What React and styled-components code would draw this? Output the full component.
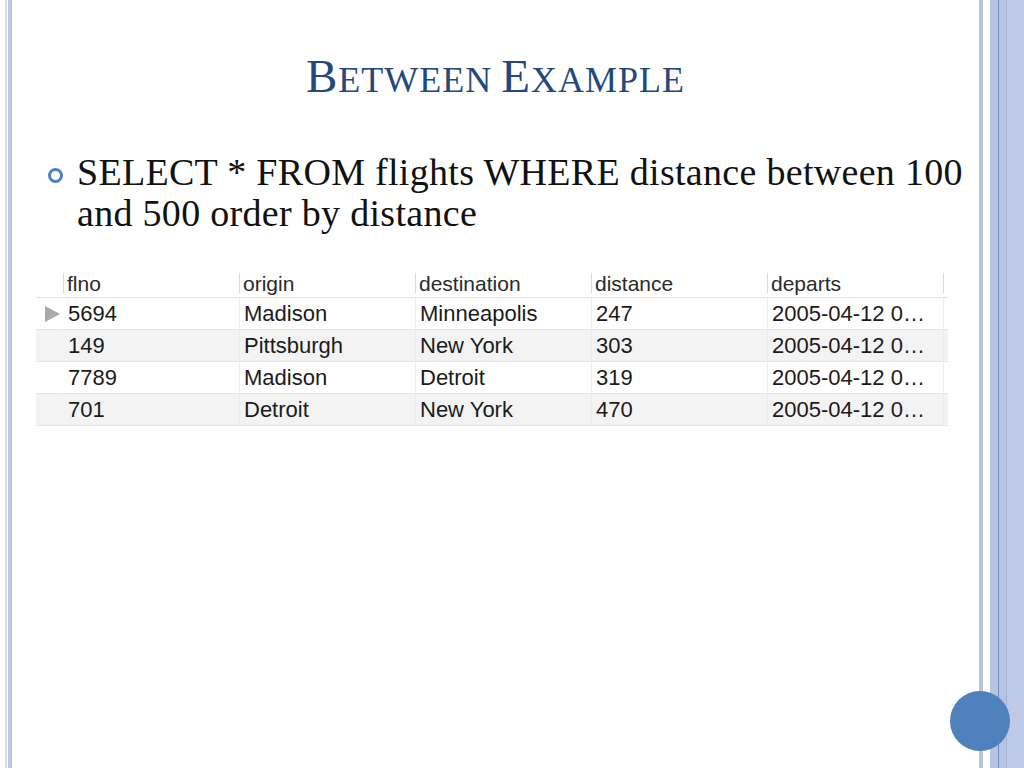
import React from "react";
import styled, { createGlobalStyle } from "styled-components";

const Global = createGlobalStyle`
  html, body { margin: 0; padding: 0; background: #ffffff; }
  #root { width: 1024px; height: 768px; }
`;

const Slide = styled.div`
  position: relative;
  width: 1024px;
  height: 768px;
  overflow: hidden;
  display: flex;
  background: #ffffff;
`;

const LeftRail = styled.div`
  flex: 0 0 12px;
  background: linear-gradient(
    to right,
    #ffffff 0 5px,
    #d4dbef 5px 7px,
    #ffffff 7px 8px,
    #bac6e6 8px 12px
  );
`;

const RightRail = styled.div`
  flex: 0 0 45px;
  background: linear-gradient(
    to right,
    #bac5da 0 4px,
    #ffffff 4px 11px,
    #b6c4e2 11px 19px,
    #6e8ec6 19px 20px,
    #b6c4e2 20px 27px,
    #a5b5d8 27px 28px,
    #bdc9e6 28px 45px
  );
`;

const Main = styled.main`
  flex: 1;
  display: flex;
  flex-direction: column;
`;

const Title = styled.h1`
  margin: 48px 0 0;
  font-family: "Liberation Serif", "Times New Roman", serif;
  font-weight: normal;
  color: #24487d;
  text-align: center;
  line-height: 56px;
  letter-spacing: 1px;
`;

const Cap = styled.span`
  font-size: 47px;
`;

const SmallCap = styled.span`
  font-size: 36px;
`;

const Bullets = styled.ul`
  list-style: none;
  margin: 43px 0 0;
  padding: 0 0 0 34px;
`;

const Bullet = styled.li`
  position: relative;
  padding-left: 31px;
  font-family: "Liberation Serif", "Times New Roman", serif;
  font-size: 38px;
  line-height: 41px;
  letter-spacing: 0.3px;
  color: #111111;

  &::before {
    content: "";
    position: absolute;
    left: 2px;
    top: 16px;
    width: 9px;
    height: 9px;
    border: 3px solid #4f81bd;
    border-radius: 50%;
  }
`;

const Table = styled.div`
  margin: 36px 0 0 24px;
  width: 912px;
  display: grid;
  grid-template-columns: 27px repeat(5, 176px) 5px;
  font-family: "Liberation Sans", Arial, sans-serif;
`;

const HeadCell = styled.div`
  height: 27px;
  line-height: 27px;
  font-size: 21px;
  color: #2a2a2a;
  padding-left: 4px;
  border-bottom: 1px solid #e2e2e2;
  position: relative;
  white-space: nowrap;

  &::before {
    content: "";
    display: ${(p) => (p.$sep ? "block" : "none")};
    position: absolute;
    left: 0;
    top: 3px;
    bottom: 4px;
    width: 1px;
    background: #dcdcdc;
  }
`;

const Cell = styled.div`
  height: 31px;
  line-height: 31px;
  font-size: 22px;
  color: #1b1b1b;
  padding-left: ${(p) => (p.$gutter ? "0" : "4px")};
  background: ${(p) => (p.$alt ? "#f3f3f3" : "#ffffff")};
  border-bottom: 1px solid #e4e4e4;
  border-left: 1px solid ${(p) => (p.$sep ? "#ececec" : "transparent")};
  white-space: nowrap;
  overflow: hidden;
  display: flex;
  align-items: center;
`;

const Arrow = styled.span`
  display: block;
  margin-left: 8px;
  width: 0;
  height: 0;
  border-top: 8px solid transparent;
  border-bottom: 8px solid transparent;
  border-left: 15px solid #a9a9a9;
`;

const Circle = styled.div`
  position: absolute;
  left: 950px;
  top: 691px;
  width: 60px;
  height: 60px;
  border-radius: 50%;
  background: #4f81bd;
`;

const headers = ["flno", "origin", "destination", "distance", "departs"];
const rows = [
  ["5694", "Madison", "Minneapolis", "247", "2005-04-12 0…"],
  ["149", "Pittsburgh", "New York", "303", "2005-04-12 0…"],
  ["7789", "Madison", "Detroit", "319", "2005-04-12 0…"],
  ["701", "Detroit", "New York", "470", "2005-04-12 0…"],
];

export default function App() {
  return (
    <>
      <Global />
      <Slide>
        <LeftRail />
        <Main>
          <Title>
            <Cap>B</Cap>
            <SmallCap>ETWEEN</SmallCap> <Cap>E</Cap>
            <SmallCap>XAMPLE</SmallCap>
          </Title>
          <Bullets>
            <Bullet>
              SELECT * FROM flights WHERE distance between 100 and 500 order by
              distance
            </Bullet>
          </Bullets>
          <Table>
            <HeadCell />
            {headers.map((h) => (
              <HeadCell key={h} $sep>
                {h}
              </HeadCell>
            ))}
            <HeadCell $sep />
            {rows.map((r, i) => (
              <React.Fragment key={i}>
                <Cell $alt={i % 2 === 1} $gutter>
                  {i === 0 && <Arrow />}
                </Cell>
                {r.map((v, j) => (
                  <Cell key={j} $alt={i % 2 === 1} $sep={j > 0}>
                    {v}
                  </Cell>
                ))}
                <Cell $alt={i % 2 === 1} $sep />
              </React.Fragment>
            ))}
          </Table>
        </Main>
        <RightRail />
        <Circle />
      </Slide>
    </>
  );
}
